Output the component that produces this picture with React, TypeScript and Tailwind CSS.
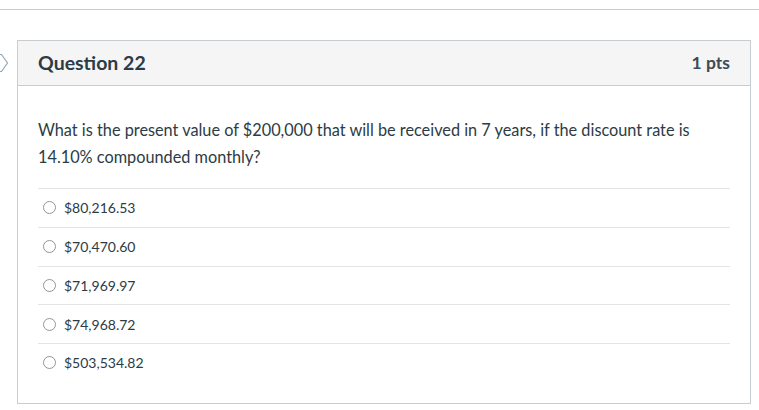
import React from "react";

const answers = ["$80,216.53", "$70,470.60", "$71,969.97", "$74,968.72", "$503,534.82"];

// Single answer row with an empty radio circle
const Answer = ({ label }: { label: string }) => (
  <div className="flex h-[38.75px] items-center border-t border-[#e2e4e6] pl-[5px]">
    <span className="h-[13px] w-[13px] rounded-full border border-[#8f969c] bg-white" />
    <span className="ml-[8px] text-[14px] text-[#2d3b45]">{label}</span>
  </div>
);

const App = () => {
  return (
    <div className="h-[410px] w-[759px] bg-white font-['Lato',sans-serif] text-[#2d3b45]">
      <div className="h-[9px]" />
      <div className="h-px bg-[#c7cdd1]" />
      <div className="relative mt-[30px] ml-[17px] h-[364px] w-[734px] border border-[#c7cdd1]">
        {/* flag marker on the left, mostly clipped */}
        <svg className="absolute left-[-19px] top-[12px]" width="10" height="20" viewBox="0 0 10 20">
          <path d="M-4 1.5 H2.5 L8.5 10 L2.5 18.5 H-4" fill="none" stroke="#93a7b8" strokeWidth="1.2" />
        </svg>
        <div className="flex h-[45px] items-center justify-between border-b border-[#c7cdd1] bg-[#f5f5f5] px-[20px]">
          <h2 className="text-[19.5px] font-bold">Question 22</h2>
          <span className="text-[17.5px] font-bold text-[#3d4a54]">1 pts</span>
        </div>
        <div className="px-[20px] pt-[30px]">
          <p className="text-[16.3px] leading-[27px]">
            What is the present value of $200,000 that will be received in 7 years, if the discount rate is 14.10%
            compounded monthly?
          </p>
          <div className="mt-[18px]">
            {answers.map((a, i) => (
              <Answer key={i} label={a} />
            ))}
          </div>
        </div>
      </div>
    </div>
  );
};

export default App;
